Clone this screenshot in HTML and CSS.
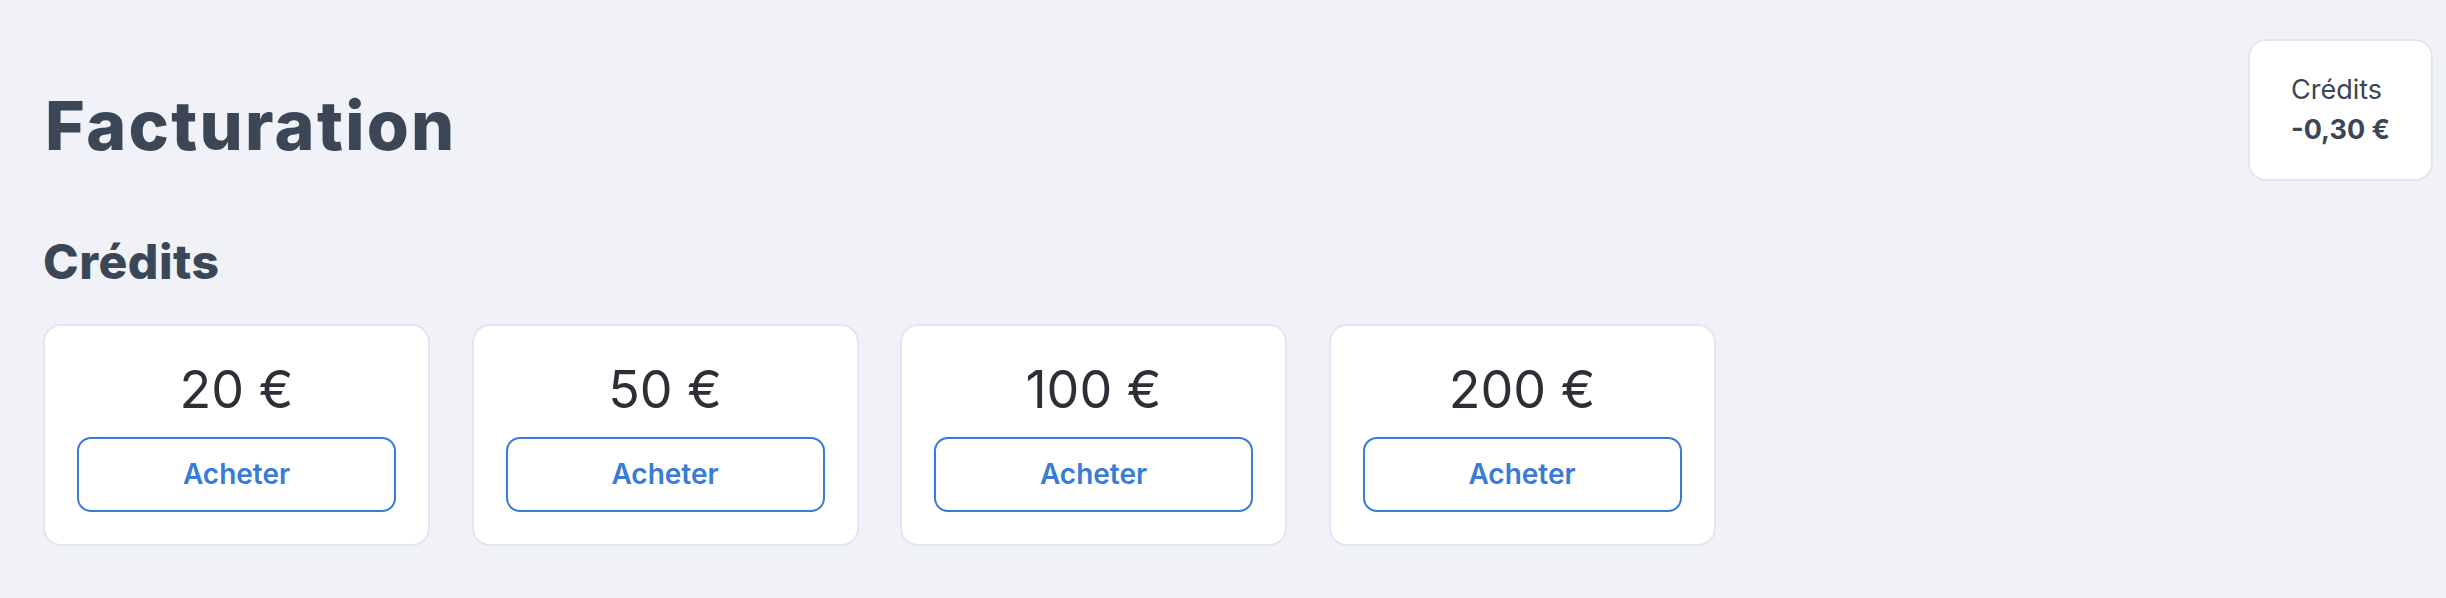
FILE: index.html
```html
<!DOCTYPE html>
<html lang="fr">
<head>
    <meta charset="UTF-8">
    <meta name="viewport" content="width=device-width, initial-scale=1.0">
    <title>Facturation</title>
    <link rel="stylesheet" href="styles.css">
</head>
<body>
    <div class="page">
        <header class="top">
            <h1>Facturation</h1>
            <div class="balance">
                <div class="balance-label">Crédits</div>
                <div class="balance-value">-0,30 €</div>
            </div>
        </header>

        <h2>Crédits</h2>
        <div class="packs">
            <div class="pack">
                <div class="amount">20 €</div>
                <button type="button">Acheter</button>
            </div>
            <div class="pack">
                <div class="amount">50 €</div>
                <button type="button">Acheter</button>
            </div>
            <div class="pack">
                <div class="amount">100 €</div>
                <button type="button">Acheter</button>
            </div>
            <div class="pack">
                <div class="amount">200 €</div>
                <button type="button">Acheter</button>
            </div>
        </div>
    </div>
</body>
</html>
```

FILE: styles.css
```css
body {
    margin: 0;
    background-color: #f0f2f7;
    font-family: 'Inter', sans-serif;
    color: #2d2f36;
}
.page {
    padding: 0 13px 0 43px;
}
.top {
    display: flex;
    justify-content: space-between;
    align-items: flex-start;
}
h1 {
    margin: 85px 0 0 2px;
    font-size: 68px;
    font-weight: 800;
    line-height: 1.2;
    letter-spacing: 2.3px;
    color: #3b4657;
}
.balance {
    margin-top: 39px;
    background-color: #fff;
    border: 2px solid #e1e6f1;
    border-radius: 18px;
    padding: 29px 41px;
    font-size: 27px;
    line-height: 40px;
    color: #3b4657;
}
.balance-value {
    font-weight: 700;
}
h2 {
    margin: 52px 0 33px;
    font-size: 48px;
    font-weight: 800;
    line-height: 1.2;
    letter-spacing: 0.5px;
    color: #3b4657;
}
.packs {
    display: flex;
    gap: 41.5px;
}
.pack {
    width: 387px;
    box-sizing: border-box;
    background-color: #fff;
    border: 2px solid #e1e6f1;
    border-radius: 18px;
    padding: 32px;
    text-align: center;
}
.amount {
    font-size: 52px;
    font-weight: 400;
    margin-bottom: 16px;
}
button {
    display: block;
    width: 100%;
    height: 75px;
    background: #fff;
    border: 2px solid #3a7bd5;
    border-radius: 14px;
    font-family: 'Inter', sans-serif;
    font-size: 28px;
    font-weight: 600;
    color: #3a7bd5;
    cursor: pointer;
}
```
